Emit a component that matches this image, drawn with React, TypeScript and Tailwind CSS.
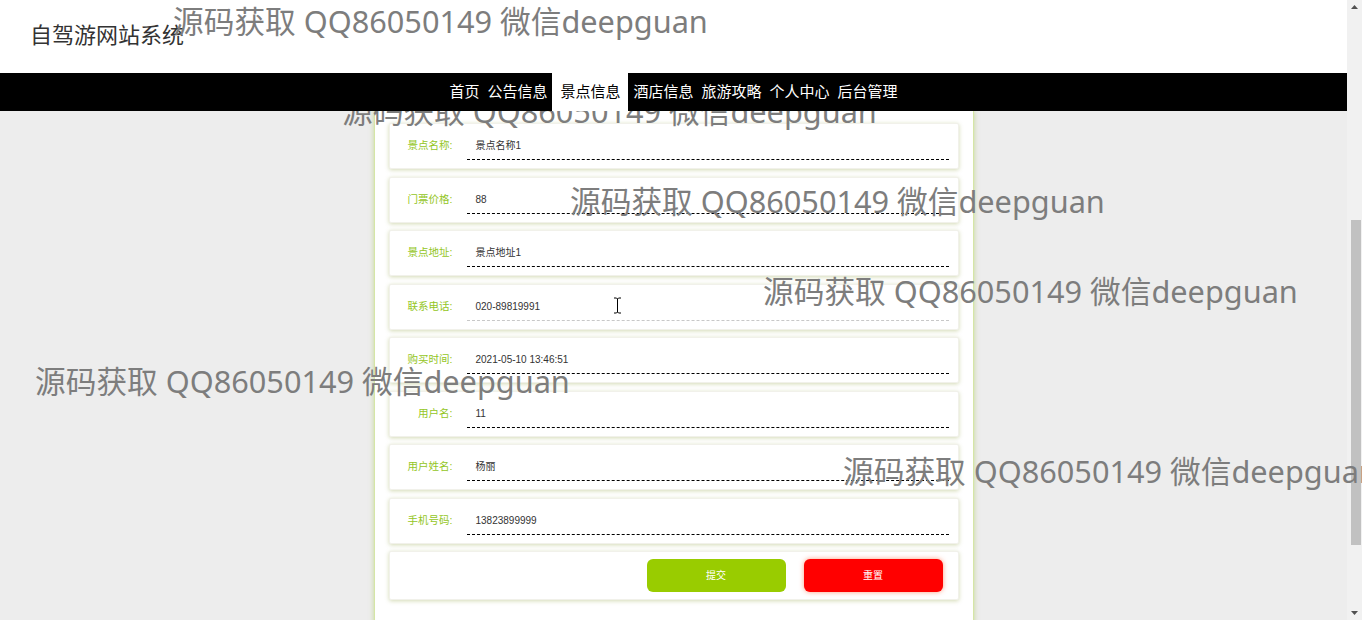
import React from "react";

const fields = [
  { label: "景点名称:", value: "景点名称1" },
  { label: "门票价格:", value: "88" },
  { label: "景点地址:", value: "景点地址1" },
  { label: "联系电话:", value: "020-89819991", focused: true },
  { label: "购买时间:", value: "2021-05-10 13:46:51" },
  { label: "用户名:", value: "11" },
  { label: "用户姓名:", value: "杨丽" },
  { label: "手机号码:", value: "13823899999" },
];

const navItems = ["首页", "公告信息", "景点信息", "酒店信息", "旅游攻略", "个人中心", "后台管理"];

const marks = [
  { x: 173, y: 6 },
  { x: 570, y: 186 },
  { x: 763, y: 276 },
  { x: 35, y: 366 },
  { x: 843, y: 456 },
];

const cjk = { fontFamily: '"Liberation Sans", "Noto Sans CJK SC", sans-serif' };
const markFont = { fontFamily: '"Noto Sans", "Noto Sans CJK SC", sans-serif' };

const Watermark = ({ x, y }: { x: number; y: number }) => (
  <div
    className="absolute whitespace-nowrap text-[30.7px] leading-[30px] text-[#7d7d7d] pointer-events-none"
    style={{ left: x, top: y, ...markFont }}
  >
    源码获取 QQ86050149 微信deepguan
  </div>
);

const FieldRow = ({ label, value, focused }: { label: string; value: string; focused?: boolean }) => (
  <div className="h-[46px] flex items-center bg-white border border-[#f1f1ea] rounded-[2px] shadow-[0_1px_4px_rgba(130,150,40,0.35)]">
    <div className="w-[63px] text-right text-[10.5px] text-[#94c61e]">{label}</div>
    <div
      className={
        "ml-[14px] mr-[9px] flex-1 h-[28px] flex items-center pl-[9px] text-[10px] text-[#333] border-b border-dashed " +
        (focused ? "border-[#c8c8c8]" : "border-black")
      }
    >
      {value}
    </div>
  </div>
);

export default function App() {
  return (
    <div className="relative w-[1362px] h-[620px] overflow-hidden flex bg-[#ededed]" style={cjk}>
      <div className="w-[1347px] flex flex-col">
        <header className="h-[73px] bg-white flex items-center pl-[30px]">
          <h1 className="text-[22px] font-normal text-[#333] -mt-[3px]">自驾游网站系统</h1>
        </header>
        <nav className="h-[38px] bg-black flex justify-center items-stretch z-10">
          {navItems.map((item) =>
            item === "景点信息" ? (
              <div key={item} className="flex items-center px-[8px] mx-[1px] bg-white text-black text-[15px]">
                {item}
              </div>
            ) : (
              <div key={item} className="flex items-center px-[4px] text-white text-[15px]">
                {item}
              </div>
            )
          )}
        </nav>
        <main className="relative flex-1 overflow-hidden flex justify-center">
          <div
            className="absolute whitespace-nowrap text-[30.7px] leading-[30px] text-[#7d7d7d]"
            style={{ left: 342, top: -15, ...markFont }}
          >
            源码获取 QQ86050149 微信deepguan
          </div>
          <div className="w-[600px] h-[560px] bg-white border border-t-0 border-[#d5e6a6] shadow-[0_0_5px_rgba(170,200,90,0.6)] px-[14px] pt-[12px] flex flex-col gap-[7.5px]">
            {fields.map((f) => (
              <FieldRow key={f.label} {...f} />
            ))}
            <div className="h-[49px] flex items-center justify-end gap-[18px] pr-[15px] bg-white border border-[#f1f1ea] rounded-[2px] shadow-[0_1px_4px_rgba(130,150,40,0.35)]">
              <button className="w-[139px] h-[33px] rounded-[6px] bg-[#99cc00] text-white text-[10px]">提交</button>
              <button className="w-[139px] h-[33px] rounded-[6px] bg-[#ff0000] text-white text-[10px] shadow-[0_0_5px_rgba(255,60,0,0.5)]">
                重置
              </button>
            </div>
          </div>
          <svg className="absolute" style={{ left: 613, top: 186 }} width="9" height="17" viewBox="0 0 9 17">
            <path d="M1 1h2.5L4.5 2l1-1H8M4.5 2v13M1 16h2.5l1-1 1 1H8" stroke="#000" strokeWidth="1" fill="none" />
          </svg>
        </main>
      </div>
      <div className="w-[15px] bg-[#f1f1f1] flex flex-col items-center">
        <svg width="15" height="15" viewBox="0 0 15 15">
          <path d="M4 9l3.5-4L11 9z" fill="#505050" />
        </svg>
        <div className="mt-[205px] w-[10px] ml-[2px] h-[325px] bg-[#c1c1c1]" />
        <div className="flex-1" />
        <svg width="15" height="15" viewBox="0 0 15 15">
          <path d="M4 6l3.5 4L11 6z" fill="#505050" />
        </svg>
      </div>
      {marks.map((m) => (
        <Watermark key={m.x} {...m} />
      ))}
    </div>
  );
}
